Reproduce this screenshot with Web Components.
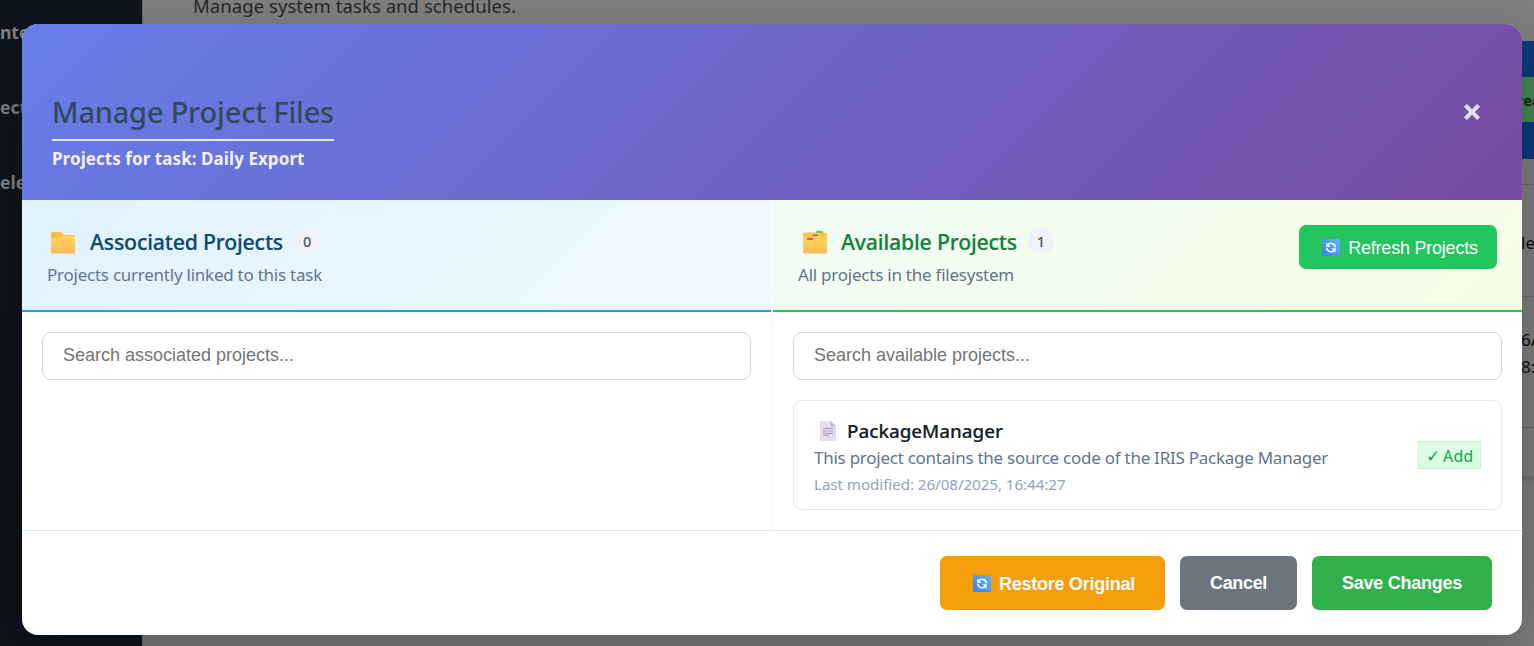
<!DOCTYPE html>
<html lang="en">
<head>
<meta charset="utf-8">
<title>Manage Project Files</title>
<style>
html,body{margin:0;height:100%;overflow:hidden}
body{font-family:"Noto Sans","Open Sans",sans-serif;background:#808080}
</style>
</head>
<body>
<task-app></task-app>
<script>
const define = (name, html, Base = HTMLElement) => {
  const t = document.createElement('template');
  t.innerHTML = html;
  customElements.define(name, class extends Base {
    constructor() {
      super();
      this.attachShadow({ mode: 'open' }).append(t.content.cloneNode(true));
    }
  });
};

/* One line of text whose tracking is adjusted so that it takes up `w` pixels. */
class FitText extends HTMLElement {
  connectedCallback() {
    if (this.shadowRoot) return;
    this.attachShadow({ mode: 'open' }).innerHTML =
      '<style>:host{display:block;white-space:nowrap}span{display:inline-block;white-space:nowrap}</style><span><slot></slot></span>';
    const s = this.shadowRoot.querySelector('span');
    const w = +this.getAttribute('w');
    requestAnimationFrame(() => {
      const n = this.textContent.length;
      const d = (w - s.getBoundingClientRect().width) / n;
      s.style.letterSpacing = d.toFixed(3) + 'px';
    });
  }
}

define('icon-folder', `<style>:host{display:block;width:26px;height:24px}svg{display:block}</style>
<svg width="26" height="24" viewBox="0 0 26 24">
<defs><linearGradient id="g" x1="0" y1="0" x2="0" y2="1"><stop offset="0" stop-color="#ffd757"/><stop offset="1" stop-color="#ffb75c"/></linearGradient></defs>
<path d="M1 3q0-2 2-2h7q1 0 2 1l2 2h9q2 0 2 2v5H1z" fill="#fcbf3f"/>
<path d="M1 8q0-1 1-1h8q1 0 2-1l1-.7q.6-.3 1.400-.3H24q1 0 1 1v15q0 1.500-1.500 1.500h-21Q1 22.500 1 21z" fill="url(#g)"/></svg>`);

define('icon-dividers', `<style>:host{display:block;width:26px;height:24px}svg{display:block;overflow:visible}</style>
<svg width="26" height="24" viewBox="0 0 26 24">
<defs><linearGradient id="g" x1="0" y1="0" x2="0" y2="1"><stop offset="0" stop-color="#ffd552"/><stop offset="1" stop-color="#ffb95b"/></linearGradient></defs>
<rect x="14" y="-.2" width="7" height="4" rx="1.500" fill="#4bcb82"/>
<rect x="1" y="1.600" width="24" height="9" rx="2" fill="#fcc13f"/>
<path d="M14.500 1.600h6V1h-6z" fill="#4bcb82"/>
<rect x="9.800" y="3.700" width="6.200" height="3" rx="1.200" fill="#4a85b5"/>
<path d="M1 7q0-2 2-2h20q2 0 2 2v5H1z" fill="#ffc94a"/>
<path d="M1 10q0-1.500 1.500-1.500H12l1.500-.7h10Q25 7.800 25 9.300V21q0 1.500-1.500 1.500h-21Q1 22.500 1 21z" fill="url(#g)"/>
<path d="M5 8.900q0-2.200 1.500-2.200H9.500q1.500 0 1.500 2.200z" fill="#f8445c"/></svg>`);

define('icon-page', `<style>:host{display:block;width:16px;height:20px}svg{display:block}</style>
<svg width="16" height="20" viewBox="0 0 16 20">
<path d="M1 0h9.500L16 5.500V19q0 1-1 1H1q-1 0-1-1V1Q0 0 1 0z" fill="#e6dcf0"/>
<path d="M10.500 0 16 5.500h-4.500q-1 0-1-1z" fill="#c4bccd"/>
<path d="M3 7.500h10M3 10h10M3 12.300h10M3 14.300h6" stroke="#aaa0b4" stroke-width="1"/></svg>`);

define('icon-refresh', `<style>:host{display:block;width:18px;height:17px}svg{display:block}</style>
<svg width="18" height="17" viewBox="0 0 18 17">
<defs><linearGradient id="g" x1="0" y1="1" x2="1" y2="0"><stop offset="0" stop-color="#3f7fe6"/><stop offset="1" stop-color="#5fb2fb"/></linearGradient></defs>
<rect width="18" height="17" rx="1.500" fill="url(#g)"/>
<path d="M6 5.300Q8.500 3.600 11 4.700Q13.400 5.800 13.300 8.300M12 11.900Q9.500 13.400 7 12.300Q4.700 11.200 4.800 8.900" fill="none" stroke="#f4f8ff" stroke-width="1.700"/>
<path d="M4.200 3.500V8h4.500zM13.800 13.700V9.200H9.300z" fill="#f4f8ff"/></svg>`);

define('icon-close', `<style>:host{display:block;width:18px;height:18px}svg{display:block}</style>
<svg width="18" height="18" viewBox="0 0 18 18"><path d="M3 3 15 15M15 3 3 15" stroke="#e4dbed" stroke-width="4.800" stroke-linecap="square" transform="translate(9 9) scale(.86) translate(-9 -9)"/></svg>`);

define('side-nav', `<style>
:host{display:block;background:linear-gradient(180deg,#0e151c,#0d1419);overflow:hidden;font-weight:700;font-size:17.500px;color:#828282;line-height:75px;white-space:nowrap}
div{height:75px}div:first-of-type{margin-top:-5px}
</style><div>nter</div><div>ects</div><div>ele</div>`);

define('task-page', `<style>
:host{display:grid;grid-template-columns:1fr 20px;overflow:hidden;background:#808080;border-left:1px solid #707070}
.intro{padding:0 0 0 50px;margin-top:-9px;font-size:18.500px;line-height:30px;color:#282828}
.edge{display:flex;flex-direction:column;padding-top:41px;color:#0c0c0c;font-size:17px;overflow:hidden;white-space:nowrap}
.blue{height:36px;background:#073c7d}
.green{height:45px;background:#448b54;font:700 14px/49px "DejaVu Sans Mono",monospace;color:#102017;text-indent:1px}
.low{height:37px}
.row{box-sizing:border-box;border-bottom:1px solid #6b6b6b;padding-left:7px;line-height:27px}
.a{height:26px}.b{height:112px;padding-top:44px}.c{height:131px;padding-top:29px}.d{height:50px;border-bottom:2px solid #747474;box-shadow:0 2px 5px #0003}
</style>
<div class="intro"><fit-text w="323">Manage system tasks and schedules.</fit-text></div>
<div class="edge"><div class="blue"></div><div class="green">rea</div><div class="blue low"></div>
<div class="row a"></div><div class="row b">le</div><div class="row c">6/<br>8:</div><div class="row d"></div></div>`);

define('modal-header', `<style>
:host{display:flex;justify-content:space-between;align-items:center;box-sizing:border-box;height:176px;padding:0 41px 0 30px;background:linear-gradient(135deg,#667eea 0%,#764ba2 100%)}
.t{margin-top:51px;height:125px}
h2{margin:0;font-size:29px;font-weight:500;line-height:40px;height:66px;box-sizing:border-box;padding-top:17px;border-bottom:2px solid #e2e8f4;color:#34495e;width:282px}
p{margin:3px 0 0;font-size:17px;font-weight:700;line-height:30px;color:#f0f2fd}
</style>
<div class="t"><h2><fit-text w="282">Manage Project Files</fit-text></h2><p><fit-text w="252.500">Projects for task: Daily Export</fit-text></p></div>
<icon-close></icon-close>`);

define('project-panel', `<style>
:host{display:flex;flex-direction:column;min-width:0;background:#fff}
header{box-sizing:border-box;height:112px;padding:25px 25px 0;display:flex;justify-content:space-between;align-items:flex-start;background:var(--tint);border-bottom:2px solid var(--line)}
.h{display:flex;align-items:center;height:34px;padding-left:3px}
.h ::slotted([slot=icon]){margin-top:2px}
.h ::slotted([slot=title]){margin-left:14px;font-size:21.300px;font-weight:500;line-height:34px;color:var(--ink);-webkit-text-stroke:.2px var(--ink)}
.n{margin:-2px 0 0 11px;min-width:26px;height:26px;border-radius:13px;color:#475569;font-size:14.500px;font-weight:500;line-height:26px;text-align:center;box-sizing:border-box;padding:0 var(--np,8px);background:#f1f2f9}
.s{font-size:17px;line-height:28px;height:28px;margin-top:2px;color:#64748b}
.body{padding:20px;display:flex;flex-direction:column;gap:20px}
.search{box-sizing:border-box;height:48px;border:1px solid #d1d5db;border-radius:9px;padding:0 20px;font:18px/44px "Liberation Sans",Arial,sans-serif;color:#757575}
</style>
<header><div><div class="h"><slot name="icon"></slot><slot name="title"></slot><span class="n"><slot name="count"></slot></span></div>
<div class="s"><slot name="sub"></slot></div></div><slot name="action"></slot></header>
<div class="body"><div class="search"><slot name="search"></slot></div><slot></slot></div>`);

define('project-card', `<style>
:host{display:flex;justify-content:space-between;align-items:center;box-sizing:border-box;height:110px;border:1px solid #e2e8f0;border-radius:9px;padding:0 20px}
.h{display:flex;align-items:center;height:28px;padding:3px 0 0 6px;font-size:18.800px;font-weight:500;-webkit-text-stroke:.2px #161c29;line-height:28px;color:#161c29}
.h fit-text{margin-left:11px}
.d{font-size:17px;line-height:26px;height:26px;color:#64748b}
.m{font-size:15.200px;line-height:26px;height:26px;margin-bottom:-1px;color:#94a3b8}
.add{box-sizing:border-box;width:63px;height:28px;border:1px solid #bbf7d0;background:#dcfce7;color:#16a34a;font-size:15.800px;line-height:28px;padding-left:7px;display:flex}
.add span{font-family:"DejaVu Sans";font-size:17px;width:17px}
</style>
<div><div class="h"><icon-page></icon-page><fit-text w="156">PackageManager</fit-text></div>
<div class="d"><fit-text w="514">This project contains the source code of the IRIS Package Manager</fit-text></div>
<div class="m"><fit-text w="251.500">Last modified: 26/08/2025, 16:44:27</fit-text></div></div>
<div class="add"><span>✓</span><fit-text w="30.500">Add</fit-text></div>`);

define('action-button', `<style>
:host{display:flex;align-items:center;justify-content:center;gap:8px;box-sizing:border-box;border-radius:7px;color:#fff;background:var(--bg);font:var(--weight,700) 18px/20px "Liberation Sans",Arial,sans-serif;white-space:nowrap}
</style><slot></slot>`);

define('project-modal', `<style>
:host{display:flex;flex-direction:column;width:1500px;height:611px;border-radius:16px;overflow:hidden;background:#fff;box-shadow:0 20px 60px rgba(0,0,0,.3)}
.cols{display:grid;grid-template-columns:1fr 1fr;gap:2px;background:#f8fafc;height:330px}
.l{--tint:linear-gradient(135deg,#e0f2fe,#f0f9ff);--line:#0ea5e9;--ink:#0c4a6e;--np:10px}
.r{--tint:linear-gradient(135deg,#f0fdf4,#f7fee7);--line:#22c55e;--ink:#15803d}
.l fit-text[slot=title]{margin-right:-1px}
.r icon-dividers{margin-left:1px;margin-right:-1px}
.refresh{width:198px;height:44px;padding:1px 0 0 4px;--bg:#22c55e;--weight:400}
footer{box-sizing:border-box;flex:1;border-top:1px solid #e2e8f0;display:flex;justify-content:flex-end;align-items:flex-start;gap:15px;padding:25px 30px 0}
footer action-button{height:54px}
.restore{--bg:#f59e0b;width:225px;padding:1px 0 0 3px}
</style>
<modal-header></modal-header>
<div class="cols">
<project-panel class="l"><icon-folder slot="icon"></icon-folder><fit-text slot="title" w="193">Associated Projects</fit-text><span slot="count">0</span>
<fit-text slot="sub" w="275">Projects currently linked to this task</fit-text><span slot="search">Search associated projects...</span></project-panel>
<project-panel class="r"><icon-dividers slot="icon"></icon-dividers><fit-text slot="title" w="176">Available Projects</fit-text><span slot="count">1</span>
<fit-text slot="sub" w="216">All projects in the filesystem</fit-text>
<action-button slot="action" class="refresh"><icon-refresh></icon-refresh><fit-text w="129.500">Refresh Projects</fit-text></action-button>
<span slot="search">Search available projects...</span><project-card></project-card></project-panel>
</div>
<footer>
<action-button class="restore"><icon-refresh></icon-refresh><fit-text w="136">Restore Original</fit-text></action-button>
<action-button style="--bg:#6c757d;width:117px"><fit-text w="57">Cancel</fit-text></action-button>
<action-button style="--bg:#30b14c;width:180px"><fit-text w="120">Save Changes</fit-text></action-button>
</footer>`);

define('task-app', `<style>
:host{position:relative;display:grid;grid-template-columns:142px 1fr;height:646px;overflow:hidden}
project-modal{position:absolute;left:22px;top:24px}
</style><side-nav></side-nav><task-page></task-page><project-modal></project-modal>`);

customElements.define('fit-text', FitText);
</script>
</body>
</html>
